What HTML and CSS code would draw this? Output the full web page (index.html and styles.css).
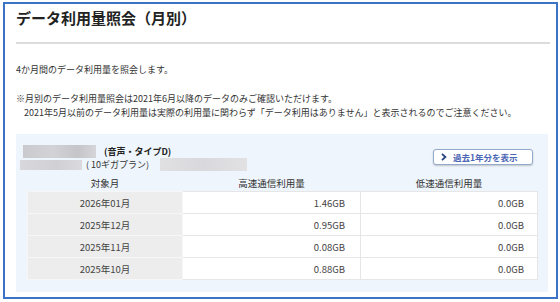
FILE: index.html
```html
<!DOCTYPE html>
<html lang="ja">
<head>
  <meta charset="UTF-8">
  <title>データ利用量照会（月別）</title>
  <link rel="stylesheet" href="styles.css">
</head>
<body>
  <div class="frame">
    <h1 class="title">データ利用量照会（月別）</h1>
    <div class="rule"></div>

    <p class="lead">4か月間のデータ利用量を照会します。</p>

    <div class="note">
      <p>※月別のデータ利用量照会は2021年6月以降のデータのみご確認いただけます。</p>
      <p class="indent">2021年5月以前のデータ利用量は実際の利用量に関わらず「データ利用はありません」と表示されるのでご注意ください。</p>
    </div>

    <div class="panel">
      <div class="panel-head">
        <div class="line-info">
          <div class="info-row">
            <span class="mask mask-a"></span>
            <span class="plan-type">(音声・タイプD)</span>
          </div>
          <div class="info-row">
            <span class="mask mask-b"></span>
            <span class="plan-name">( 10ギガプラン)</span>
            <span class="mask mask-c"></span>
          </div>
        </div>
        <button class="history-btn">
          <svg width="6" height="8" viewBox="0 0 6 8"><path d="M1 0.8 L4.4 4 L1 7.2" fill="none" stroke="#27437f" stroke-width="1.8"/></svg>
          過去1年分を表示
        </button>
      </div>

      <table class="usage">
        <thead>
          <tr>
            <th>対象月</th>
            <th>高速通信利用量</th>
            <th>低速通信利用量</th>
          </tr>
        </thead>
        <tbody>
          <tr><td class="month">2026年01月</td><td>1.46GB</td><td>0.0GB</td></tr>
          <tr><td class="month">2025年12月</td><td>0.95GB</td><td>0.0GB</td></tr>
          <tr><td class="month">2025年11月</td><td>0.08GB</td><td>0.0GB</td></tr>
          <tr><td class="month">2025年10月</td><td>0.88GB</td><td>0.0GB</td></tr>
        </tbody>
      </table>
    </div>
  </div>
</body>
</html>
```

FILE: styles.css
```css
body {
  margin: 0;
  background-color: #ffffff;
  font-family: "Noto Sans CJK JP", "Noto Sans", sans-serif;
  color: #333333;
}

.frame {
  margin: 2px 2px 0 3px;
  height: 297px;
  box-sizing: border-box;
  border: 2px solid #3b74c6;
  padding: 0 6px 0 11px;
  background-color: #ffffff;
}

.title {
  margin: 4px 0 0;
  font-size: 15px;
  line-height: 20px;
  font-weight: bold;
  color: #222222;
}

.rule {
  height: 2px;
  margin-top: 14px;
  background-color: #dcdcdc;
}

.lead {
  margin: 19px 0 0;
  font-size: 9px;
  line-height: 14px;
}

.note {
  margin-top: 15px;
  font-size: 9px;
  line-height: 14px;
}

.note p {
  margin: 0;
}

.note .indent {
  padding-left: 8px;
}

/* Data panel */
.panel {
  margin-top: 14px;
  margin-right: 2px;
  padding: 11px 10px 12px 11px;
  background-color: #eef5fc;
}

.panel-head {
  display: flex;
  justify-content: space-between;
  align-items: flex-start;
}

.line-info {
  font-size: 9px;
  line-height: 13px;
}

.info-row {
  display: flex;
  align-items: center;
  height: 13px;
}

.mask {
  display: inline-block;
  background: linear-gradient(90deg, #c9c9ce 0%, #d3d3d7 40%, #c4c4c9 75%, #d6d6da 100%);
}

.mask-a {
  width: 73px;
  height: 13px;
  margin-left: -4px;
}

.mask-b {
  width: 62px;
  height: 10px;
  margin-left: -7px;
  background: linear-gradient(90deg, #d8d8dc, #d0d0d5 60%, #dadade);
}

.mask-c {
  width: 87px;
  height: 13px;
  margin-left: 11px;
  background: linear-gradient(90deg, #e0e0e3, #d9d9dd 50%, #e2e2e5);
}

.plan-type {
  margin-left: 8px;
  font-weight: bold;
  color: #222222;
}

.plan-name {
  margin-left: 4px;
  color: #333333;
}

.history-btn {
  display: flex;
  align-items: center;
  gap: 6px;
  width: 100px;
  height: 16px;
  margin: 4px 5px 0 0;
  padding: 0 0 0 7px;
  border: 1px solid #93a9cc;
  border-radius: 3px;
  background-color: #ffffff;
  box-shadow: 0 1px 2px rgba(0, 0, 0, 0.2);
  font-family: "Noto Sans CJK JP", sans-serif;
  font-size: 8.5px;
  font-weight: bold;
  color: #4a66b4;
  cursor: pointer;
}

/* Usage table */
.usage {
  width: 100%;
  margin-top: 4px;
  border-collapse: collapse;
  font-size: 9.5px;
}

.usage th {
  height: 16px;
  padding: 0;
  font-weight: normal;
  color: #333333;
  text-align: center;
  vertical-align: middle;
}

.usage th:first-child {
  width: 155px;
}

.usage th:nth-child(2) {
  width: 178px;
}

.usage td {
  height: 21px;
  padding: 0 15px 0 0;
  border: 1px solid #e6e6e6;
  background-color: #ffffff;
  text-align: right;
  color: #444444;
}

.usage td.month {
  padding: 0;
  text-align: center;
  background-color: #ededed;
  border-color: #f6f6f6;
}

.usage td:last-child {
  padding-right: 13px;
}
```
